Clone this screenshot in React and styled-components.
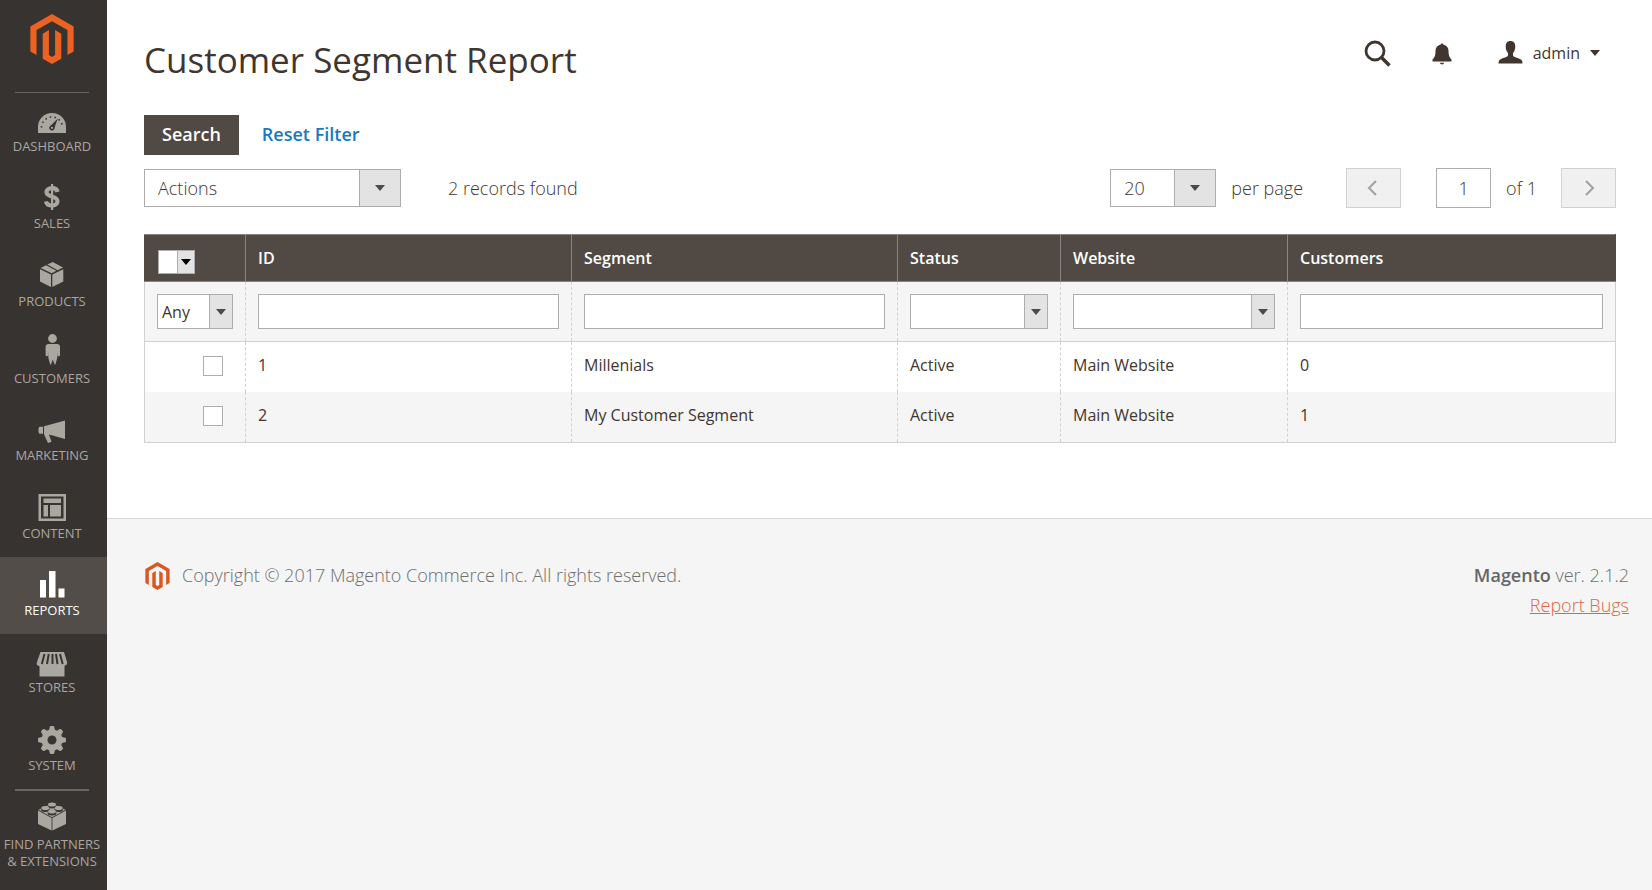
import React from 'react';
import styled, { createGlobalStyle, css } from 'styled-components';

const GlobalStyle = createGlobalStyle`
  *, *::before, *::after { box-sizing: border-box; }
  body {
    margin: 0;
    background: #fff;
    color: #41362f;
    font-family: 'Open Sans', 'Liberation Sans', sans-serif;
    font-size: 16px;
  }
  button, input, select { font: inherit; color: inherit; margin: 0; }
  svg { display: block; flex: none; overflow: visible; }
`;

const Page = styled.div`
  display: flex;
  min-height: 100vh;
`;

/* ---------- sidebar ---------- */

const Sidebar = styled.nav`
  display: flex;
  flex-direction: column;
  flex: none;
  width: 107px;
  background: #373330;
`;

const LogoLink = styled.a`
  display: flex;
  justify-content: center;
  padding: 14px 3px 28px 0;
`;

const Divider = styled.hr`
  width: 74px;
  height: ${(p) => p.$size}px;
  margin: 0 0 0 15px;
  border: 0;
  background: #6b6561;
`;

const MenuList = styled.ul`
  display: flex;
  flex: 1;
  flex-direction: column;
  margin: 0;
  padding: 0;
  list-style: none;
`;

const MenuItem = styled.li`
  flex: 1;
  background: ${(p) => (p.$active ? '#524d49' : 'transparent')};
`;

const MenuLink = styled.a`
  display: flex;
  flex-direction: column;
  align-items: center;
  gap: 1px;
  padding: 12px 3px ${(p) => (p.$last ? 20 : 14)}px 0;
  color: ${(p) => (p.$active ? '#fff' : '#aaa6a0')};
  font-size: 13px;
  line-height: 17px;
  text-align: center;
  text-decoration: none;
  text-transform: uppercase;
  white-space: nowrap;
`;

const IconBox = styled.span`
  display: flex;
  align-items: center;
  justify-content: center;
  width: 32px;
  height: 32px;
`;

/* ---------- main column ---------- */

const Main = styled.div`
  display: flex;
  flex: 1;
  flex-direction: column;
  min-width: 0;
`;

const Content = styled.main`
  padding: 36px 36px 75px 37px;
`;

const Header = styled.header`
  display: flex;
  justify-content: space-between;
  margin-bottom: 31px;
`;

const Title = styled.h1`
  margin: 0;
  font-size: 35px;
  font-weight: 400;
  line-height: 48px;
`;

const HeaderActions = styled.div`
  display: flex;
  align-items: center;
  gap: 42px;
  height: 34px;
  padding-right: 16px;
`;

const IconButton = styled.button`
  display: flex;
  align-items: center;
  gap: 10px;
  padding: 0;
  border: 0;
  background: none;
  color: #41362f;
  line-height: 24px;
`;

const ButtonRow = styled.div`
  display: flex;
  margin-bottom: 13px;
`;

const ActionButton = styled.button`
  height: 40px;
  border: 0;
  font-size: 18px;
  font-weight: 550;
  ${(p) =>
    p.$primary
      ? css`
          padding: 0 18px 2px;
          background: #514943;
          color: #fff;
        `
      : css`
          padding: 0 23px 2px;
          background: none;
          color: #1979c3;
        `}
`;

const Toolbar = styled.div`
  display: flex;
  align-items: center;
  justify-content: space-between;
  margin-bottom: 26px;
  font-size: 18px;
  font-weight: 340;
  line-height: 24px;
`;

const ToolbarGroup = styled.div`
  display: flex;
  align-items: center;
`;

const RecordCount = styled.span`
  margin-left: 47px;
`;

const PerPage = styled.label`
  display: flex;
  align-items: center;
  gap: 15px;
  margin-right: 43px;
`;

const PagerButton = styled.button`
  display: flex;
  align-items: center;
  justify-content: center;
  width: 55px;
  height: 40px;
  padding: 0;
  border: 1px solid #d1d1d1;
  background: #f0f0f0;
  color: #a3a09d;
`;

const PageField = styled.label`
  display: flex;
  align-items: center;
  gap: 15px;
  margin: 0 24px 0 35px;
`;

const PageInput = styled.input`
  width: 55px;
  height: 40px;
  padding: 0;
  border: 1px solid #adadad;
  background: #fff;
  text-align: center;
`;

/* ---------- drop-down ---------- */

const SIZES = {
  large: { height: 38, arrow: 42, pad: 13, font: 18 },
  filter: { height: 35, arrow: 24, pad: 4, font: 16 },
  tiny: { height: 20, arrow: 18, pad: 0, font: 13 },
};

const SelectFrame = styled.span`
  display: grid;
  width: ${(p) => p.$width};
  height: ${(p) => SIZES[p.$size].height}px;
`;

const SelectControl = styled.select`
  grid-area: 1 / 1;
  width: 100%;
  padding: 0 0 0 ${(p) => SIZES[p.$size].pad}px;
  border: 1px solid #adadad;
  border-radius: 0;
  background: #fff;
  font-size: ${(p) => SIZES[p.$size].font}px;
  appearance: none;
`;

const SelectArrow = styled.span`
  display: flex;
  grid-area: 1 / 1;
  align-items: center;
  justify-content: center;
  justify-self: end;
  width: ${(p) => SIZES[p.$size].arrow}px;
  border: 1px solid #adadad;
  background: #e3e3e3;
  color: ${(p) => (p.$size === 'tiny' ? '#000' : '#514943')};
  pointer-events: none;
`;

function Caret() {
  return (
    <svg width="10" height="6" viewBox="0 0 10 6" aria-hidden="true">
      <path d="M0 0h10L5 6z" fill="currentColor" />
    </svg>
  );
}

function Select({ size, width = '100%', options, ...rest }) {
  return (
    <SelectFrame $size={size} $width={width}>
      <SelectControl $size={size} {...rest}>
        {options.map((o) => (
          <option key={o}>{o}</option>
        ))}
      </SelectControl>
      <SelectArrow $size={size}>
        <Caret />
      </SelectArrow>
    </SelectFrame>
  );
}

/* ---------- data grid ---------- */

const Grid = styled.table`
  width: 100%;
  border-collapse: collapse;
  table-layout: fixed;
  border: 1px solid #d1d1d1;
`;

const Column = styled.col`
  width: ${(p) => p.$width}px;
`;

const HeadCell = styled.th`
  height: 47px;
  padding: ${(p) => (p.$control ? '3px 13px 0' : '0 12px')};
  border: 1px solid #8a837f;
  border-left-color: ${(p) => (p.$control ? '#514943' : '#8a837f')};
  background: #514943;
  color: #fff;
  font-weight: 600;
  line-height: 22px;
  text-align: left;

  &:last-child { border-right-color: #514943; }
`;

const FilterCell = styled.td`
  height: 60px;
  padding: 0 12px;
  border-bottom: 1px solid #d1d1d1;
  border-left: 1px dashed #d1d1d1;
  background: #f5f5f5;

  &:first-child { border-left: 1px solid #d1d1d1; }
`;

const FilterInput = styled.input`
  display: block;
  width: 100%;
  height: 35px;
  padding: 0 8px;
  border: 1px solid #adadad;
  background: #fff;
`;

const Row = styled.tr`
  height: ${(p) => (p.$striped ? 51 : 50)}px;
  background: ${(p) => (p.$striped ? '#f5f5f5' : '#fff')};
`;

const Cell = styled.td`
  padding: 0 12px 3px;
  border-left: 1px dashed #d1d1d1;
  line-height: 22px;
`;

const CheckCell = styled.td`
  padding: 0 22px 1px 0;
`;

const Checkbox = styled.input`
  display: block;
  width: 20px;
  height: 20px;
  margin: 0 0 0 auto;
  border: 1px solid #adadad;
  background: #fff;
  appearance: none;

  &:checked { background: #514943; }
`;

/* ---------- footer ---------- */

const Footer = styled.footer`
  display: flex;
  flex: 1;
  align-items: flex-start;
  justify-content: space-between;
  padding: 41px 23px 41px 38px;
  border-top: 1px solid #d6d6d6;
  background: #f5f5f5;
  color: #6e6e6e;
  font-size: 18px;
  font-weight: 340;
  line-height: 30px;
`;

const Copyright = styled.p`
  display: flex;
  align-items: flex-end;
  gap: 12px;
  margin: 0;
`;

const Version = styled.p`
  margin: 0;
  text-align: right;

  strong { color: #666; font-weight: 650; }
`;

const BugLink = styled.a`
  color: #de6643;
`;

/* ---------- drawings ---------- */

function MagentoLogo({ height, color }) {
  return (
    <svg width={Math.round(height * 0.88)} height={height} viewBox="1.609 0 20.782 24" aria-hidden="true">
      <path
        fill={color}
        d="M12 24l-4.455-2.572v-12l2.97-1.715v12.001l1.485.902 1.485-.902V7.713l2.971 1.715v12L12 24zM22.391 6v12l-2.969 1.714V7.713L12 3.43 4.574 7.713v12.001L1.609 18V6L12 0l10.391 6z"
      />
    </svg>
  );
}

function Glyph({ children }) {
  return (
    <svg width="32" height="32" viewBox="0 0 32 32" fill="currentColor" aria-hidden="true">
      {children}
    </svg>
  );
}

const DARK = '#373330';

const DashboardIcon = () => (
  <Glyph>
    <path d="M2 28v-6a14 14 0 0 1 28 0v6z" />
    <path d="M5.500 22.500A10.500 10.500 0 0 1 26.500 22.500" fill="none" stroke={DARK} strokeWidth="1.700" strokeDasharray="1.500 3.200" />
    <path d="M21.800 13.500l-3.600 10a2.400 2.400 0 1 1-3.800-2.400z" fill={DARK} />
    <circle cx="16" cy="22.800" r="2.500" fill={DARK} />
    <circle cx="16" cy="22.800" r="1.100" />
  </Glyph>
);

const SalesIcon = () => (
  <Glyph>
    <path
      d="M21.500 10c-.5-2.500-2.500-3.800-5.500-3.800s-5.500 1.600-5.500 4.100c0 5.200 11 3.200 11 9 0 2.500-2.500 4.200-5.500 4.200s-5.500-1.500-6-4.200"
      fill="none"
      stroke="currentColor"
      strokeWidth="4.200"
    />
    <path d="M15 2h2.200v26H15z" />
  </Glyph>
);

const ProductsIcon = () => (
  <Glyph>
    <path d="M4 9.300L15 14.600V27L4 21.600zM27.300 9.300L16.300 14.600V27l11-5.400z" />
    <path d="M11.300 4.600L16.700 2l10.300 5.500-5.300 2.700zM4.700 7.900L10 5.300l10.400 5.500-4.700 2.500z" />
  </Glyph>
);

const CustomersIcon = () => (
  <Glyph>
    <circle cx="16.500" cy="1.500" r="4.400" />
    <path d="M12.500 7h8.500a3 3 0 0 1 3 3v8.500l-1.500 1-1-1v-4l-.3 6.500-1.800 6.500h-.8l-1.800-5-1.800 5h-.8l-1.800-6.500-.3-6.500v4l-1 1-1.500-1V10a3 3 0 0 1 3-3z" />
  </Glyph>
);

const MarketingIcon = () => (
  <Glyph>
    <path d="M3.500 12.800H7v7H3.500l-1-1.500v-4zM8 12.300l21-5.800v18.500L14 20.800h-1l2.500 7-3.500 1.200L8 20.300z" />
  </Glyph>
);

const ContentIcon = () => (
  <Glyph>
    <path fillRule="evenodd" d="M2.500 2h27.500v27H2.500zM5 4.500v22h22.500v-22z" />
    <path d="M7.500 6.500H25V11H7.500zM7.500 13h4.500v11.500H7.500zM14 13h11v11.500H14z" />
  </Glyph>
);

const ReportsIcon = () => (
  <Glyph>
    <path d="M4 11h6v17.500H4zM13 2h6.500v26.500H13zM22.500 19.500h6v9h-6z" />
  </Glyph>
);

const StoresIcon = () => (
  <Glyph>
    <path d="M3.500 18v12.500h25V18z" />
    <path d="M4.500 6h23.500l3.200 10.500a2.900 2.900 0 0 1-5.500 1.500 3 3 0 0 1-4.800 0 3 3 0 0 1-4.800.5 3 3 0 0 1-4.800-.5 3 3 0 0 1-4.800 0A2.900 2.900 0 0 1 .8 16.500z" />
    <path d="M8.500 8L5.800 18M12.700 8L11 18M16.500 8V18M20 8l1.500 10M24 8l2.700 10" stroke={DARK} strokeWidth="2" fill="none" />
  </Glyph>
);

const GearIcon = () => (
  <Glyph>
    <circle cx="16" cy="16" r="7.500" fill="none" stroke="currentColor" strokeWidth="6" />
    {[0, 45, 90, 135, 180, 225, 270, 315].map((a) => (
      <path key={a} d="M12.800 7l1-4.200q.2-.8 1-.8h2.400q.8 0 1 .8l1 4.200z" transform={`rotate(${a} 16 16)`} />
    ))}
  </Glyph>
);

const PartnersIcon = () => (
  <Glyph>
    <path d="M2 7.500L15.600 15v12.500L2 21zM30 7.500L16.400 15v12.500L30 21z" />
    <path d="M2.500 6.800L16 .5l13.500 6.300L16 14.200z" />
    <g fill={DARK}>
      <ellipse cx="16" cy="3" rx="4.400" ry="2.500" />
      <ellipse cx="9.300" cy="6.400" rx="4.400" ry="2.500" />
      <ellipse cx="22.700" cy="6.400" rx="4.400" ry="2.500" />
      <ellipse cx="16" cy="9.900" rx="4.400" ry="2.500" />
    </g>
    <ellipse cx="16" cy="1.500" rx="4" ry="2" />
    <ellipse cx="9.300" cy="5" rx="4" ry="2" />
    <ellipse cx="22.700" cy="5" rx="4" ry="2" />
    <ellipse cx="16" cy="8.500" rx="4" ry="2" />
  </Glyph>
);

const SearchIcon = () => (
  <svg width="26" height="26" viewBox="0 0 26 26" fill="none" stroke="currentColor" aria-hidden="true">
    <circle cx="11" cy="11" r="9" strokeWidth="2.800" />
    <path d="M17.500 17.500l8 8" strokeWidth="3.600" />
  </svg>
);

const BellIcon = () => (
  <svg width="24" height="24" viewBox="0 0 24 24" fill="currentColor" aria-hidden="true">
    <path d="M10 2.500a1.500 1.500 0 0 1 1.500 1.300c3.500.6 5 3 5 6.200 0 4.500 1 6.500 3 8.500v2H.5v-2c2-2 3-4 3-8.500 0-3.200 1.500-5.600 5-6.200A1.500 1.500 0 0 1 10 2.500zM7.800 21.800h4.400a2.300 2.300 0 0 1-4.400 0z" />
  </svg>
);

const UserIcon = () => (
  <svg width="25" height="24" viewBox="0 0 25 24" fill="currentColor" aria-hidden="true">
    <path d="M12.500 0c3.300 0 4.800 2.200 4.800 5.500 0 2.800-.9 5-2.300 6.500v2.500c.5 1.500 4 2.200 7 3.500 2 .8 2.500 2.500 2.500 4.500H.5c0-2 .5-3.700 2.500-4.500 3-1.300 6.500-2 7-3.500V12C8.600 10.500 7.700 8.300 7.700 5.500 7.700 2.200 9.200 0 12.500 0z" />
  </svg>
);

function Chevron({ flip }) {
  return (
    <svg width="10" height="16" viewBox="0 0 10 16" fill="none" stroke="currentColor" strokeWidth="2" aria-hidden="true">
      <path d={flip ? 'M2 1l7 7-7 7' : 'M7 1L0 8l7 7'} />
    </svg>
  );
}

/* ---------- data ---------- */

const MENU = [
  { label: 'Dashboard', icon: <DashboardIcon /> },
  { label: 'Sales', icon: <SalesIcon /> },
  { label: 'Products', icon: <ProductsIcon /> },
  { label: 'Customers', icon: <CustomersIcon /> },
  { label: 'Marketing', icon: <MarketingIcon /> },
  { label: 'Content', icon: <ContentIcon /> },
  { label: 'Reports', icon: <ReportsIcon />, active: true },
  { label: 'Stores', icon: <StoresIcon /> },
  { label: 'System', icon: <GearIcon /> },
];

const SEGMENTS = [
  { id: 1, name: 'Millenials', status: 'Active', website: 'Main Website', customers: 0 },
  { id: 2, name: 'My Customer Segment', status: 'Active', website: 'Main Website', customers: 1 },
];

export default function App() {
  return (
    <>
      <GlobalStyle />
      <Page>
        <Sidebar aria-label="Main menu">
          <LogoLink href="#home" aria-label="Magento Admin">
            <MagentoLogo height={50} color="#eb6223" />
          </LogoLink>
          <Divider $size={1} />
          <MenuList>
            {MENU.map((m) => (
              <MenuItem key={m.label} $active={m.active}>
                <MenuLink href={`#${m.label.toLowerCase()}`} $active={m.active}>
                  <IconBox>{m.icon}</IconBox>
                  {m.label}
                </MenuLink>
              </MenuItem>
            ))}
          </MenuList>
          <Divider $size={2} />
          <MenuLink href="#partners" $last>
            <IconBox>
              <PartnersIcon />
            </IconBox>
            <span>
              Find Partners
              <br />
              &amp; Extensions
            </span>
          </MenuLink>
        </Sidebar>

        <Main>
          <Content>
            <Header>
              <Title>Customer Segment Report</Title>
              <HeaderActions>
                <IconButton type="button" aria-label="Search">
                  <SearchIcon />
                </IconButton>
                <IconButton type="button" aria-label="Notifications">
                  <BellIcon />
                </IconButton>
                <IconButton type="button">
                  <UserIcon />
                  admin
                  <Caret />
                </IconButton>
              </HeaderActions>
            </Header>

            <ButtonRow>
              <ActionButton type="button" $primary>
                Search
              </ActionButton>
              <ActionButton type="button">Reset Filter</ActionButton>
            </ButtonRow>

            <Toolbar>
              <ToolbarGroup>
                <Select size="large" width="257px" options={['Actions']} aria-label="Actions" />
                <RecordCount>2 records found</RecordCount>
              </ToolbarGroup>
              <ToolbarGroup>
                <PerPage>
                  <Select size="large" width="106px" options={['20', '30', '50', '100', '200']} />
                  per page
                </PerPage>
                <PagerButton type="button" aria-label="Previous page" disabled>
                  <Chevron />
                </PagerButton>
                <PageField>
                  <PageInput type="text" defaultValue="1" aria-label="Page" />
                  of 1
                </PageField>
                <PagerButton type="button" aria-label="Next page" disabled>
                  <Chevron flip />
                </PagerButton>
              </ToolbarGroup>
            </Toolbar>

            <Grid>
              <colgroup>
                <Column $width={101} />
                <Column $width={326} />
                <Column $width={326} />
                <Column $width={163} />
                <Column $width={227} />
                <col />
              </colgroup>
              <thead>
                <tr>
                  <HeadCell $control>
                    <Select size="tiny" width="37px" options={['', 'Select All']} aria-label="Select rows" />
                  </HeadCell>
                  <HeadCell>ID</HeadCell>
                  <HeadCell>Segment</HeadCell>
                  <HeadCell>Status</HeadCell>
                  <HeadCell>Website</HeadCell>
                  <HeadCell>Customers</HeadCell>
                </tr>
              </thead>
              <tbody>
                <tr>
                  <FilterCell>
                    <Select size="filter" options={['Any', 'Yes', 'No']} aria-label="Filter by selection" />
                  </FilterCell>
                  <FilterCell>
                    <FilterInput type="text" aria-label="Filter by ID" />
                  </FilterCell>
                  <FilterCell>
                    <FilterInput type="text" aria-label="Filter by segment" />
                  </FilterCell>
                  <FilterCell>
                    <Select size="filter" options={['', 'Active', 'Inactive']} aria-label="Filter by status" />
                  </FilterCell>
                  <FilterCell>
                    <Select size="filter" options={['', 'Main Website']} aria-label="Filter by website" />
                  </FilterCell>
                  <FilterCell>
                    <FilterInput type="text" aria-label="Filter by customers" />
                  </FilterCell>
                </tr>
                {SEGMENTS.map((s, i) => (
                  <Row key={s.id} $striped={i % 2 === 1}>
                    <CheckCell>
                      <Checkbox type="checkbox" aria-label={`Select ${s.name}`} />
                    </CheckCell>
                    <Cell>{s.id}</Cell>
                    <Cell>{s.name}</Cell>
                    <Cell>{s.status}</Cell>
                    <Cell>{s.website}</Cell>
                    <Cell>{s.customers}</Cell>
                  </Row>
                ))}
              </tbody>
            </Grid>
          </Content>

          <Footer>
            <Copyright>
              <MagentoLogo height={28} color="#d9581f" />
              Copyright © 2017 Magento Commerce Inc. All rights reserved.
            </Copyright>
            <Version>
              <strong>Magento</strong> ver. 2.1.2
              <br />
              <BugLink href="#bugs">Report Bugs</BugLink>
            </Version>
          </Footer>
        </Main>
      </Page>
    </>
  );
}
